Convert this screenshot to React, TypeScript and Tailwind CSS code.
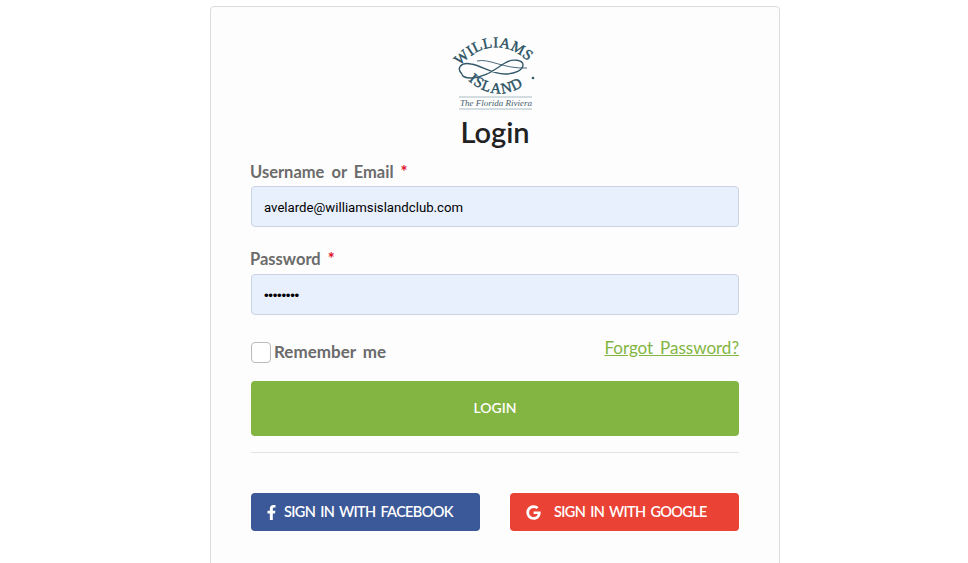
import { FaFacebookF, FaGoogle } from "react-icons/fa";

const Logo = () => (
  <svg width="80" height="76" viewBox="0 0 80 76" className="block overflow-visible">
    <defs>
      <path id="logoTop" d="M2 33 Q38 -8 76 28" fill="none" />
      <path id="logoBottom" d="M7 39 Q40 72 74 46" fill="none" />
    </defs>
    <text fontFamily="Liberation Serif, serif" fontSize="15" fill="#2a5263" stroke="#2a5263" strokeWidth="0.4">
      <textPath href="#logoTop" startOffset="4" textLength="78">WILLIAMS</textPath>
    </text>
    <text fontFamily="Liberation Serif, serif" fontSize="15" fill="#2a5263" stroke="#2a5263" strokeWidth="0.4">
      <textPath href="#logoBottom" startOffset="8" textLength="60">ISLAND</textPath>
    </text>
    <path
      d="M7 38 C1 32 6 26 16 28 C28 30 36 38 50 38 C60 38 68 34 68 29 C68 24 58 22 50 27 C40 33 30 42 16 42 C10 42 7 40 7 38"
      fill="none"
      stroke="#35596a"
      strokeWidth="1.4"
    />
    <path d="M22 25 C34 22 48 33 72 32" fill="none" stroke="#35596a" strokeWidth="0.9" />
    <circle cx="78" cy="42" r="1.3" fill="#35596a" />
    <line x1="4" y1="61" x2="77" y2="61" stroke="#a9bcc6" strokeWidth="1" />
    <line x1="4" y1="73" x2="77" y2="73" stroke="#a9bcc6" strokeWidth="1" />
    <text x="41" y="70" textAnchor="middle" fontFamily="Liberation Serif, serif" fontStyle="italic" fontSize="9" fill="#47606d">
      The Florida Riviera
    </text>
  </svg>
);

const App = () => {
  return (
    <div className="h-[563px] overflow-hidden bg-white font-['Lato',sans-serif]">
      <div className="ml-[210px] mt-[6px] w-[570px] h-[600px] rounded-[4px] border border-[#dcdcdc] bg-[#fdfdfd] px-10 pt-[29px]">
        <div className="flex flex-col items-center">
          <Logo />
          <h1 className="mt-[4px] text-[29px] leading-[32px] font-semibold text-[#222]">Login</h1>
        </div>

        <label className="mt-[12px] -ml-px flex text-[16.5px] leading-[24px] font-bold text-[#6b6b6b] [word-spacing:3px]">
          <span>Username or Email</span>
          <span className="ml-[7px] text-[#e0102b]">*</span>
        </label>
        <div className="mt-[2px] flex h-[41px] items-center rounded-[4px] border border-[#c9d3e2] bg-[#e8f0fe] px-3 pt-[2px] font-['Roboto',sans-serif] text-[13.2px] text-black">
          avelarde@williamsislandclub.com
        </div>

        <label className="mt-[20px] -ml-px flex text-[16.5px] leading-[24px] font-bold text-[#6b6b6b]">
          <span>Password</span>
          <span className="ml-[7px] text-[#e0102b]">*</span>
        </label>
        <div className="mt-[3px] flex h-[41px] items-center rounded-[4px] border border-[#c9d3e2] bg-[#e8f0fe] px-3 pt-[2px] font-['Liberation_Sans',sans-serif] text-[13.33px] tracking-[-0.3px] text-black">
          ••••••••
        </div>

        <div className="mt-[22px] flex items-start justify-between">
          <div className="flex items-center gap-[3px] pt-[3px]">
            <span className="h-[21px] w-[20px] rounded-[4px] border border-[#bbb] bg-white" />
            <span className="text-[17px] leading-[24px] font-bold text-[#6b6b6b] [word-spacing:3px]">Remember me</span>
          </div>
          <a className="pt-px text-[17px] leading-[20px] text-[#82b541] underline [word-spacing:2.5px]">Forgot Password?</a>
        </div>

        <button className="mt-[17px] flex h-[55px] w-full items-center justify-center rounded-[4px] bg-[#82b541] pb-[2px] text-[14px] font-semibold text-white">
          LOGIN
        </button>

        <div className="mt-4 border-t border-[#e3e3e3]" />

        <div className="mt-10 flex justify-between">
          <button className="flex h-[38px] w-[229px] items-center rounded-[4px] bg-[#3b5998] pl-[13px] text-[14.5px] font-semibold tracking-[-0.65px] text-white [word-spacing:2px]">
            <FaFacebookF className="h-[15px] w-[15px]" />
            <span className="ml-[5px]">SIGN IN WITH FACEBOOK</span>
          </button>
          <button className="flex h-[38px] w-[229px] items-center rounded-[4px] bg-[#ea4335] pl-4 text-[14.5px] font-semibold tracking-[-0.65px] text-white [word-spacing:2px]">
            <FaGoogle className="h-[15px] w-[15px]" />
            <span className="ml-[13px]">SIGN IN WITH GOOGLE</span>
          </button>
        </div>
      </div>
    </div>
  );
};

export default App;
